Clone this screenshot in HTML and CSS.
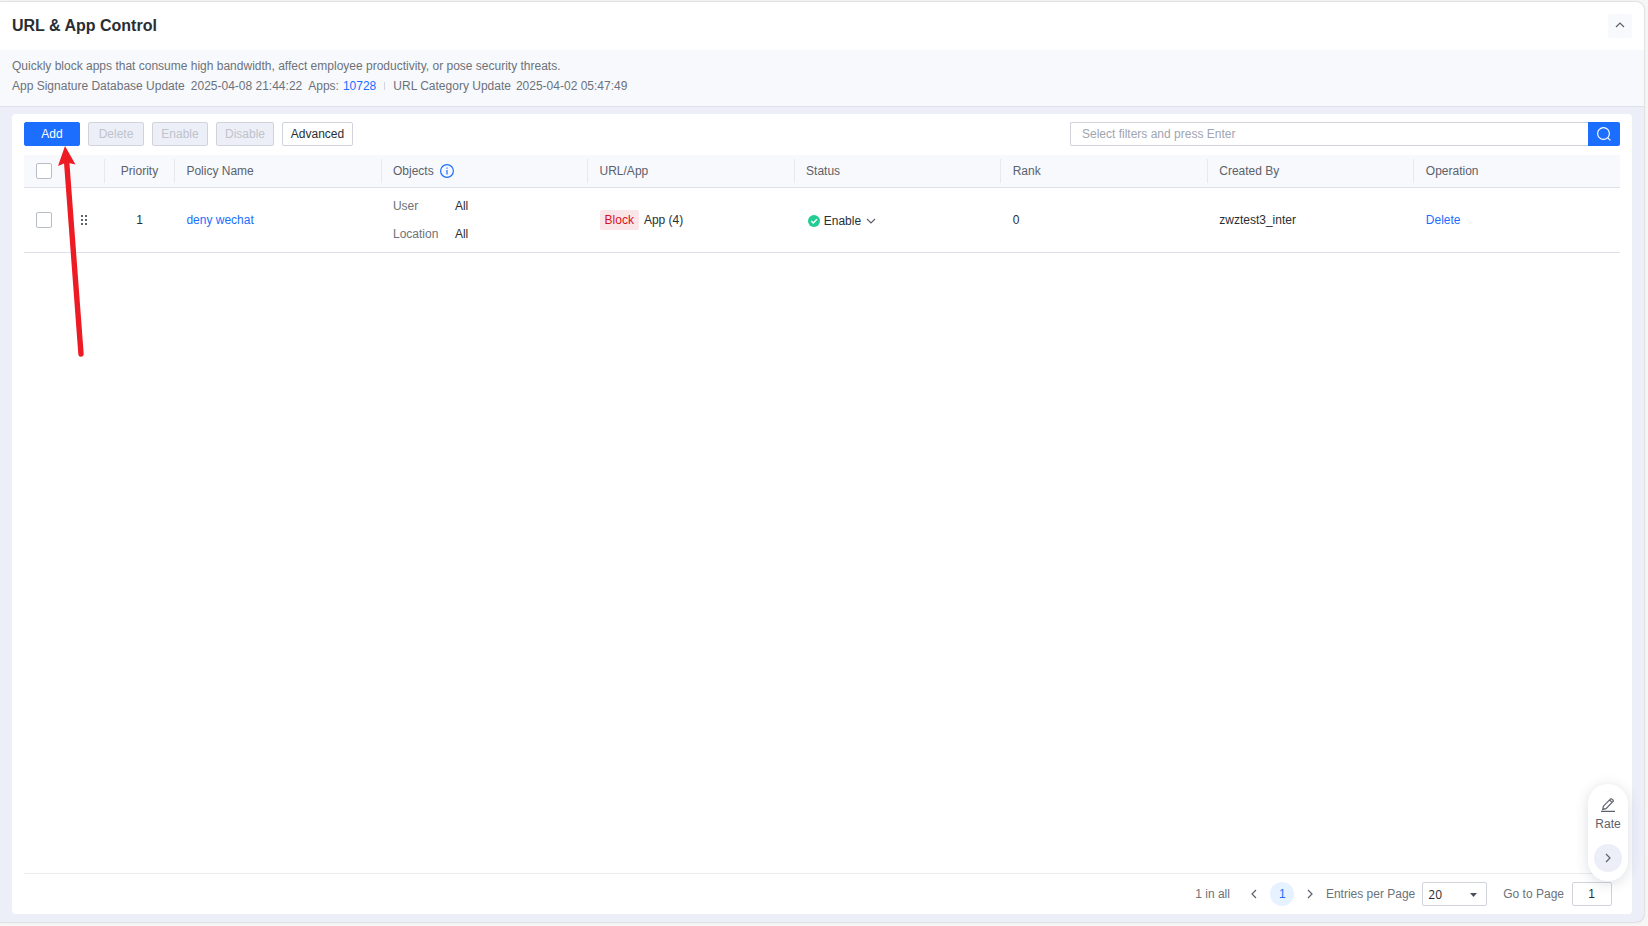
FILE: index.html
```html
<!DOCTYPE html>
<html lang="en">
<head>
    <meta charset="UTF-8">
    <title>URL &amp; App Control</title>
    <link rel="stylesheet" href="styles.css">
</head>
<body>
    <div class="panel">
        <div class="header">
            <h1>URL &amp; App Control</h1>
            <button class="collapse">
                <svg width="10" height="6" viewBox="0 0 10 6"><path d="M1 5l4-4 4 4" /></svg>
            </button>
        </div>
        <div class="info">
            <div>Quickly block apps that consume high bandwidth, affect employee productivity, or pose security threats.</div>
            <div class="info-line">
                <span>App Signature Database Update</span>
                <span class="date">2025-04-08 21:44:22</span>
                <span class="apps">Apps:</span>
                <a class="count">10728</a>
                <i class="split"></i>
                <span>URL Category Update</span>
                <span class="date last">2025-04-02 05:47:49</span>
            </div>
        </div>
        <div class="content">
            <div class="card">
                <div class="toolbar">
                    <button class="btn primary">Add</button>
                    <button class="btn" disabled>Delete</button>
                    <button class="btn" disabled>Enable</button>
                    <button class="btn wide" disabled>Disable</button>
                    <button class="btn advanced">Advanced</button>
                    <div class="search">
                        <input type="text" placeholder="Select filters and press Enter">
                        <button class="search-btn">
                            <svg width="16" height="16" viewBox="0 0 16 16"><circle cx="7.5" cy="7.5" r="5.9" /><path d="M11.8 11.8l2.6 2.6" /></svg>
                        </button>
                    </div>
                </div>

                <div class="row head">
                    <div class="cell check"><span class="checkbox"></span></div>
                    <div class="cell"></div>
                    <div class="cell line center">Priority</div>
                    <div class="cell line">Policy Name</div>
                    <div class="cell line">Objects
                        <svg class="tip" width="14" height="14" viewBox="0 0 14 14"><circle cx="7" cy="7" r="6.4" /><path d="M7 6v4.5M7 3.5v1.2" /></svg>
                    </div>
                    <div class="cell line">URL/App</div>
                    <div class="cell line">Status</div>
                    <div class="cell line">Rank</div>
                    <div class="cell line">Created By</div>
                    <div class="cell line">Operation</div>
                </div>
                <div class="row">
                    <div class="cell check"><span class="checkbox"></span></div>
                    <div class="cell drag">
                        <svg width="6" height="10" viewBox="0 0 6 10"><path d="M0 0h2v2H0zM4 0h2v2H4zM0 4h2v2H0zM4 4h2v2H4zM0 8h2v2H0zM4 8h2v2H4z" /></svg>
                    </div>
                    <div class="cell center">1</div>
                    <div class="cell"><a>deny wechat</a></div>
                    <div class="cell">
                        <dl class="objects">
                            <dt>User</dt><dd>All</dd>
                            <dt>Location</dt><dd>All</dd>
                        </dl>
                    </div>
                    <div class="cell"><span class="tag">Block</span>App (4)</div>
                    <div class="cell status">
                        <svg class="ok" width="12" height="12" viewBox="0 0 12 12"><circle cx="6" cy="6" r="6" /><path d="M3.2 6.1l2.1 2 3.6-3.8" /></svg>
                        Enable
                        <svg class="arrow" width="10" height="6" viewBox="0 0 10 6"><path d="M1 1l4 4 4-4" /></svg>
                    </div>
                    <div class="cell">0</div>
                    <div class="cell">zwztest3_inter</div>
                    <div class="cell"><a>Delete</a></div>
                </div>

                <div class="pager">
                    <span class="total">1 in all</span>
                    <svg class="prev" width="6" height="10" viewBox="0 0 6 10"><path d="M5 1L1 5l4 4" /></svg>
                    <span class="current">1</span>
                    <svg class="next" width="6" height="10" viewBox="0 0 6 10"><path d="M1 1l4 4-4 4" /></svg>
                    <span class="label">Entries per Page</span>
                    <div class="select">20
                        <svg width="7" height="4" viewBox="0 0 7 4"><path d="M0 0h7L3.5 4z" /></svg>
                    </div>
                    <span class="label">Go to Page</span>
                    <input class="page" type="text" value="1">
                </div>
            </div>
        </div>
    </div>

    <div class="float">
        <svg class="pen" width="14" height="14" viewBox="0 0 14 14"><path d="M0 13.4h14M1.8 11.4l.6-3.2L9.6.9q.5-.5 1 0l1.5 1.4q.5.5 0 1L5 10.6zM8.6 2l2.5 2.4" /></svg>
        <span>Rate</span>
        <div class="round">
            <svg width="6" height="10" viewBox="0 0 6 10"><path d="M1 1l4 4-4 4" /></svg>
        </div>
    </div>

    <!-- pointer to the Add button -->
    <svg class="pointer" width="24" height="214" viewBox="0 0 24 214">
        <path class="shaft" d="M8.5 14L23 208" />
        <path class="tip-head" d="M7 0L17.5 18.5 8.5 16.5 0 20z" />
    </svg>
</body>
</html>
```
FILE: styles.css
```css
* {
    box-sizing: border-box;
}
body {
    margin: 0;
    padding-top: 2px;
    height: 926px;
    overflow: hidden;
    background: #f6f6f6;
    font-family: "Liberation Sans", Arial, sans-serif;
    font-size: 12px;
    line-height: 20px;
    color: #292e33;
}
button, input {
    font-family: inherit;
    font-size: 12px;
    padding: 0;
    border-radius: 2px;
    outline: none;
}
a {
    color: #1c6eff;
}
svg {
    fill: none;
    stroke: #5c616b;
    stroke-width: 1.2;
    flex: none;
}
.panel {
    width: 1644px;
    height: 920px;
    display: flex;
    flex-direction: column;
    background: #eceff8;
    border-radius: 0 8px 8px 0;
    box-shadow: 0 0 2px rgba(0,0,0,0.3);
    overflow: hidden;
}
.header {
    height: 48px;
    padding: 0 12px;
    display: flex;
    align-items: center;
    justify-content: space-between;
    background: #fff;
}
h1 {
    margin: 0;
    font-size: 16px;
    line-height: 24px;
}
.collapse {
    width: 24px;
    height: 24px;
    padding-bottom: 2px;
    display: flex;
    align-items: center;
    justify-content: center;
    background: #f7f9fd;
    border: 0;
}
.info {
    height: 57px;
    padding: 6px 12px;
    background: #f7f9fd;
    border-bottom: 1px solid #dfe1e8;
    color: #6c727a;
}
.info-line {
    display: flex;
    align-items: center;
}
.date {
    margin-left: 6px;
}
.date.last {
    margin-left: 5px;
}
.apps {
    margin: 0 4px 0 6px;
}
.split {
    width: 1px;
    height: 8px;
    margin: 0 8px;
    background: #d3d6de;
}
.content {
    flex: 1;
    padding: 7px 12px 8px;
}
.card {
    height: 100%;
    padding: 8px 12px 0;
    display: flex;
    flex-direction: column;
    background: #fff;
    border-radius: 4px;
}
.toolbar {
    display: flex;
    gap: 8px;
    margin-bottom: 9px;
}
.btn {
    width: 56px;
    height: 24px;
    background: #fff;
    border: 1px solid #d0d3db;
    color: #292e33;
}
.btn:disabled {
    background: #eceff8;
    color: #bfc3cc;
}
.btn.primary {
    background: #1c6eff;
    border-color: #1c6eff;
    color: #fff;
}
.btn.wide {
    width: 58px;
}
.btn.advanced {
    width: 71px;
}
.search {
    width: 550px;
    margin-left: auto;
    display: flex;
}
.search input {
    flex: 1;
    height: 24px;
    padding-left: 11px;
    border: 1px solid #d0d3db;
    border-right: 0;
    border-radius: 2px 0 0 2px;
}
.search input::placeholder {
    color: #a0a5af;
}
.search-btn {
    width: 32px;
    height: 24px;
    display: flex;
    align-items: center;
    justify-content: center;
    background: #1c6eff;
    border: 0;
    border-radius: 0 2px 2px 0;
}
.search-btn svg {
    stroke: #fff;
}
.row {
    height: 65px;
    display: grid;
    grid-template-columns: 40px 40px 70px repeat(7, 1fr);
    align-items: center;
    border-bottom: 1px solid #dfe1e8;
}
.head {
    height: 33px;
    background: #f7f9fd;
    color: #5c616b;
}
.cell {
    display: flex;
    align-items: center;
    height: 24px;
    padding-left: 11.4px;
    border-left: 1px solid transparent;
}
.line {
    border-left-color: #e6e9ef;
}
.center {
    padding: 0;
    justify-content: center;
}
.check {
    padding-left: 11px;
}
.checkbox {
    width: 16px;
    height: 16px;
    background: #fff;
    border: 1px solid #b9bdc7;
    border-radius: 2px;
}
.drag {
    padding-left: 16px;
}
.drag svg {
    fill: #5c616b;
    stroke: none;
}
.tip {
    margin-left: 6px;
    stroke: #1c6eff;
}
.objects {
    margin: 0;
    display: grid;
    grid-template-columns: 62px auto;
    row-gap: 8px;
    color: #6c727a;
}
.objects dd {
    margin: 0;
    color: #292e33;
}
.tag {
    height: 20px;
    margin-right: 5px;
    padding: 0 5px;
    background: #fae6e8;
    border-radius: 2px;
    color: #d9101e;
}
.status {
    padding: 1px 0 0 13px;
}
.ok {
    margin-right: 4px;
}
.ok circle {
    fill: #22cc94;
    stroke: none;
}
.ok path {
    stroke: #fff;
    stroke-width: 1.4;
}
.arrow {
    margin-left: 5px;
}
.pager {
    height: 41px;
    margin-top: auto;
    padding-right: 8.5px;
    display: flex;
    align-items: center;
    justify-content: flex-end;
    border-top: 1px solid #ebebed;
    color: #6c727a;
}
.prev {
    margin: 0 13.5px 0 21px;
}
.current {
    width: 24px;
    height: 24px;
    border-radius: 50%;
    background: #e6f2ff;
    color: #1c6eff;
    line-height: 24px;
    text-align: center;
}
.next {
    margin: 0 13px 0 12.5px;
}
.select {
    width: 65px;
    height: 24px;
    margin: 0 16px 0 7px;
    padding: 1px 9px 0 5px;
    display: flex;
    align-items: center;
    justify-content: space-between;
    border: 1px solid #d0d3db;
    border-radius: 2px;
    color: #292e33;
    font-family: "Open Sans", sans-serif;
}
.select svg {
    fill: #4b5059;
    stroke: none;
}
.page {
    width: 40px;
    height: 24px;
    margin-left: 7.5px;
    border: 1px solid #d0d3db;
    text-align: center;
    color: #292e33;
}
.float {
    position: absolute;
    left: 1588px;
    top: 784px;
    width: 40px;
    height: 97px;
    padding-top: 14px;
    display: flex;
    flex-direction: column;
    align-items: center;
    background: #fff;
    border-radius: 20px;
    box-shadow: 0 2px 14px rgba(40,50,80,0.16);
    color: #5c616b;
}
.float span {
    margin-top: 2px;
}
.round {
    width: 28px;
    height: 28px;
    margin-top: 10px;
    display: flex;
    align-items: center;
    justify-content: center;
    background: #eceff8;
    border-radius: 50%;
}
.pointer {
    position: absolute;
    left: 58px;
    top: 146px;
    overflow: visible;
}
.shaft {
    stroke: #ed1c24;
    stroke-width: 5.4;
    stroke-linecap: round;
}
.tip-head {
    fill: #ed1c24;
    stroke: none;
}
```
